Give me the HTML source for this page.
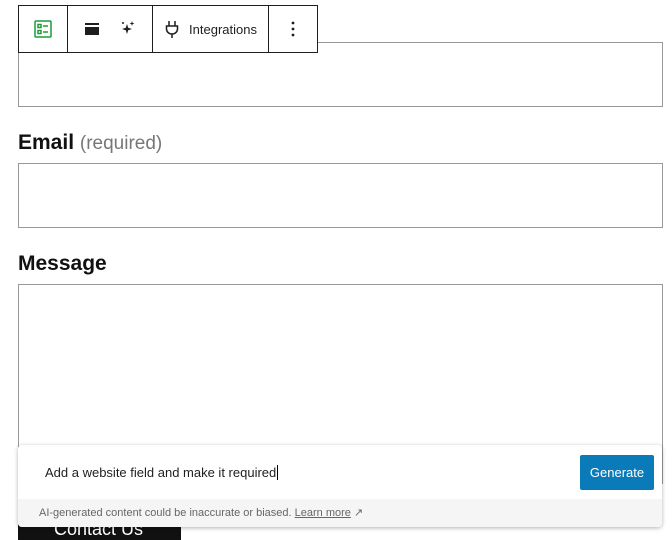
<!DOCTYPE html>
<html><head><meta charset="utf-8"><style>
body{margin:0;width:672px;height:533px;overflow:hidden;background:#fff;font-family:"Liberation Sans",sans-serif;position:relative}
.box{position:absolute;left:18px;width:645px;border:1px solid #999;background:#fff;box-sizing:border-box}
.lbl{position:absolute;left:18px;font-size:21px;font-weight:bold;color:#111}
.lbl span{font-weight:normal;color:#777;font-size:19px}
.tb{position:absolute;left:18px;top:5px;width:300px;height:48px;border:1px solid #1e1e1e;background:#fff;box-sizing:border-box;display:flex}
.tb div{border-right:1px solid #1e1e1e;display:flex;align-items:center;justify-content:center;box-sizing:border-box;flex:none}
.tb div:last-child{border-right:none;flex:1}
.panel{position:absolute;left:18px;top:445px;width:644px;height:82px;background:#fff;border-radius:4px;box-shadow:0 1px 4px rgba(0,0,0,.3);overflow:hidden}
.foot{position:absolute;left:0;right:0;bottom:0;height:28px;background:#f5f5f5;font-size:11px;color:#666;line-height:28px;padding-left:21px}
.gen{position:absolute;left:562px;top:10px;width:74px;height:35px;background:#0a7bb8;color:#fff;font-size:13px;text-align:center;line-height:35px;border-radius:2px}
</style></head><body>
<div class="box" style="top:42px;height:65px"></div>
<div class="lbl" style="top:131px">Email <span>(required)</span></div>
<div class="box" style="top:163px;height:65px"></div>
<div class="lbl" style="top:252px">Message</div>
<div class="box" style="top:284px;height:200px"></div>
<div style="position:absolute;left:18px;top:520px;width:163px;height:20px;background:#111;color:#fff;font-size:18px;padding-left:36px;box-sizing:border-box;line-height:18px">Contact Us</div>
<div class="tb">
 <div style="width:49px"><svg width="20" height="20" viewBox="0 0 20 20" fill="none" stroke="#1a9c3a" stroke-width="1.5"><rect x="2" y="2" width="16" height="16" rx="1"/><rect x="5" y="5.5" width="3" height="3"/><rect x="5" y="11.5" width="3" height="3"/><path d="M10 7h5M10 13h5"/></svg></div>
 <div style="width:85px;justify-content:space-around;padding:0 6px"><svg width="16" height="16" viewBox="0 0 16 16"><rect x="1" y="2" width="14" height="2" fill="#1e1e1e"/><rect x="1" y="6" width="14" height="8" fill="#1e1e1e"/></svg><svg width="18" height="18" viewBox="0 0 18 18" fill="#1e1e1e"><path d="M8 4l1.2 3.8L13 9l-3.8 1.2L8 14l-1.2-3.8L3 9l3.8-1.2z"/><path d="M13 1l.6 1.9 1.9.6-1.9.6L13 6l-.6-1.9-1.9-.6 1.9-.6z"/><circle cx="4" cy="3" r="1"/></svg></div>
 <div style="width:116px;font-size:13px;color:#1e1e1e"><svg width="16" height="18" viewBox="0 0 16 18" fill="none" stroke="#1e1e1e" stroke-width="1.5" style="margin-right:9px"><path d="M5 1v5M11 1v5M2.5 6h11v3a5.5 5 0 0 1-11 0zM8 14v4"/></svg>Integrations</div>
 <div><svg width="4" height="16" viewBox="0 0 4 16" fill="#1e1e1e"><circle cx="2" cy="2" r="1.4"/><circle cx="2" cy="8" r="1.4"/><circle cx="2" cy="14" r="1.4"/></svg></div>
</div>
<div class="panel">
 <div style="position:absolute;left:27px;top:20px;font-size:13px;color:#1e1e1e">Add a website field and make it required<span style="border-left:1px solid #000;margin-left:1px"></span></div>
 <div class="gen">Generate</div>
 <div class="foot">AI-generated content could be inaccurate or biased. <u>Learn more</u> ↗</div>
</div>
</body></html>
